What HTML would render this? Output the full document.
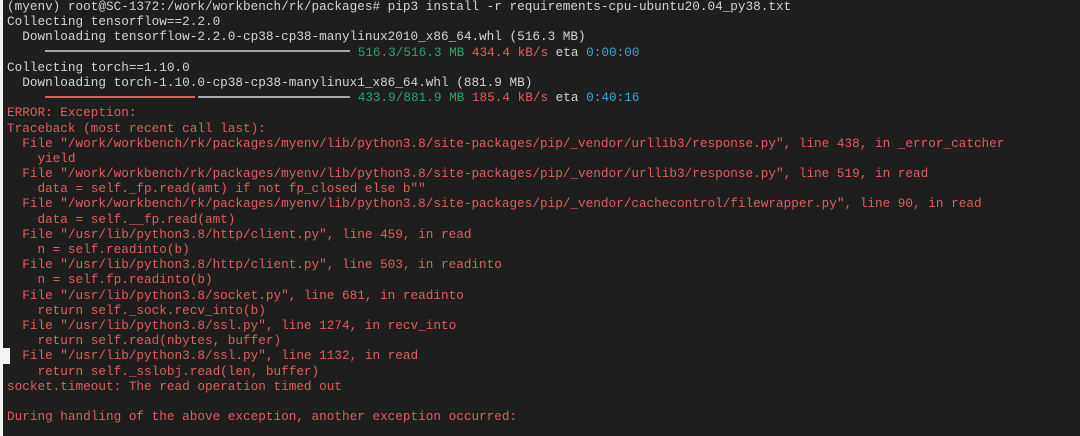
<!DOCTYPE html>
<html><head><meta charset="utf-8"><style>
html,body{margin:0;padding:0;}
body{width:1080px;height:436px;background:#1e1e1e;overflow:hidden;position:relative;}
.edge{position:absolute;left:0;top:0;width:3px;height:436px;background:#f4f4f4;}
.box{position:absolute;left:0;top:348px;width:10px;height:16px;background:#f4f4f4;}
pre{position:absolute;left:7px;top:-1px;margin:0;font-family:"Liberation Mono",monospace;font-size:12.7px;line-height:15.19px;color:#d4d4d4;}
.r{color:#e05e5e}.g{color:#2fa36b}.b{color:#3fa8d0}
.bar{display:inline-block;height:2px;vertical-align:middle;position:relative;top:-1px;}
</style></head><body>
<div class="edge"></div><div class="box"></div>
<pre>(myenv) root@SC-1372:/work/workbench/rk/packages# pip3 install -r requirements-cpu-ubuntu20.04_py38.txt
Collecting tensorflow==2.2.0
  Downloading tensorflow-2.2.0-cp38-cp38-manylinux2010_x86_64.whl (516.3 MB)
     <span class="bar" style="width:305px;background:#a8a8a8"></span> <span class="g">516.3/516.3 MB</span> <span class="r">434.4 kB/s</span> eta <span class="b">0:00:00</span>
Collecting torch==1.10.0
  Downloading torch-1.10.0-cp38-cp38-manylinux1_x86_64.whl (881.9 MB)
     <span class="bar" style="width:150px;background:#e05e5e"></span><span class="bar" style="width:3px"></span><span class="bar" style="width:152px;background:#a8a8a8"></span> <span class="g">433.9/881.9 MB</span> <span class="r">185.4 kB/s</span> eta <span class="b">0:40:16</span>
<span class="r">ERROR: Exception:
Traceback (most recent call last):
  File "/work/workbench/rk/packages/myenv/lib/python3.8/site-packages/pip/_vendor/urllib3/response.py", line 438, in _error_catcher
    yield
  File "/work/workbench/rk/packages/myenv/lib/python3.8/site-packages/pip/_vendor/urllib3/response.py", line 519, in read
    data = self._fp.read(amt) if not fp_closed else b""
  File "/work/workbench/rk/packages/myenv/lib/python3.8/site-packages/pip/_vendor/cachecontrol/filewrapper.py", line 90, in read
    data = self.__fp.read(amt)
  File "/usr/lib/python3.8/http/client.py", line 459, in read
    n = self.readinto(b)
  File "/usr/lib/python3.8/http/client.py", line 503, in readinto
    n = self.fp.readinto(b)
  File "/usr/lib/python3.8/socket.py", line 681, in readinto
    return self._sock.recv_into(b)
  File "/usr/lib/python3.8/ssl.py", line 1274, in recv_into
    return self.read(nbytes, buffer)
  File "/usr/lib/python3.8/ssl.py", line 1132, in read
    return self._sslobj.read(len, buffer)
socket.timeout: The read operation timed out

During handling of the above exception, another exception occurred:</span>
</pre>
</body></html>
